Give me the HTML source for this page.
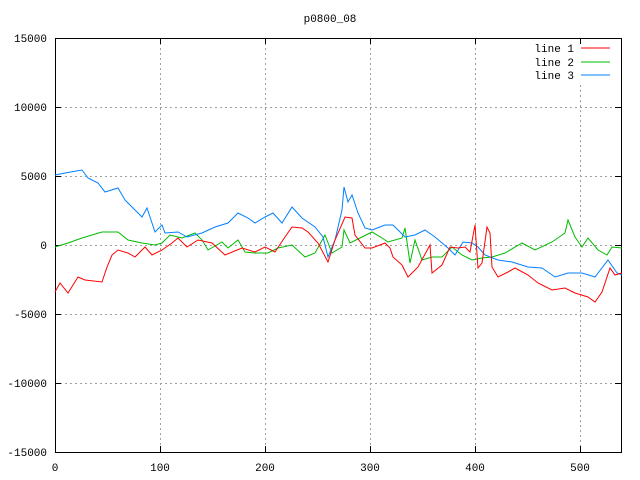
<!DOCTYPE html><html><head><style>body{margin:0;background:#fff}svg{display:block}text{font-family:"Liberation Mono","DejaVu Sans Mono",monospace;font-size:11px;fill:#000}</style></head><body>
<svg width="640" height="480" viewBox="0 0 640 480">
<g stroke="#a0a0a0" stroke-dasharray="2,3" stroke-width="1">
<line x1="160.5" y1="38" x2="160.5" y2="452"/><line x1="265.5" y1="38" x2="265.5" y2="452"/><line x1="370.5" y1="38" x2="370.5" y2="452"/><line x1="475.5" y1="38" x2="475.5" y2="452"/><line x1="580.5" y1="85" x2="580.5" y2="452"/>
<line x1="55" y1="107.5" x2="621" y2="107.5"/><line x1="55" y1="176.5" x2="621" y2="176.5"/><line x1="55" y1="245.5" x2="621" y2="245.5"/><line x1="55" y1="314.5" x2="621" y2="314.5"/><line x1="55" y1="383.5" x2="621" y2="383.5"/>
</g>
<g stroke="#000" stroke-width="1">
<rect x="55.5" y="38.5" width="566" height="414" fill="none"/>
<path d="M55 107.5h6M55 176.5h6M55 245.5h6M55 314.5h6M55 383.5h6M621 107.5h-6M621 176.5h-6M621 245.5h-6M621 314.5h-6M621 383.5h-6M160.5 452v-6M265.5 452v-6M370.5 452v-6M475.5 452v-6M580.5 452v-6M160.5 38v6M265.5 38v6M370.5 38v6M475.5 38v6M580.5 38v6"/>
</g>
<text x="330" y="22" text-anchor="middle">p0800_08</text>
<g text-anchor="end"><text x="47" y="42">15000</text><text x="47" y="111">10000</text><text x="47" y="180">5000</text><text x="47" y="249">0</text><text x="47" y="318">-5000</text><text x="47" y="387">-10000</text><text x="47" y="456">-15000</text></g>
<g text-anchor="middle"><text x="55" y="471">0</text><text x="160" y="471">100</text><text x="265" y="471">200</text><text x="370" y="471">300</text><text x="475" y="471">400</text><text x="580" y="471">500</text></g>
<g text-anchor="end"><text x="574" y="52">line 1</text><text x="574" y="66">line 2</text><text x="574" y="79">line 3</text></g>
<line x1="581" y1="48" x2="610" y2="48" stroke="#f00"/><line x1="581" y1="62" x2="610" y2="62" stroke="#0b0"/><line x1="581" y1="75" x2="610" y2="75" stroke="#0080ff"/>
<g fill="none" stroke-width="1">
<polyline stroke="#0b0" points="55,247 68,243 82,238 102,232 118,232 128,240 142,243 155,245 162,243 170,235 182,238 195,233 202,240 208,250 222,242 228,248 238,240 245,252 255,253 268,253 278,248 292,245 305,257 315,253 325,235 332,253 342,247 344,230 350,243 362,237 372,232 382,238 388,242 402,238 405,228 410,263 415,240 422,260 432,257 442,257 452,247 462,255 472,260 482,258 492,257 505,253 522,243 535,250 552,242 565,233 568,220 575,237 582,247 588,238 598,250 607,255 612,247 622,248"/>
<polyline stroke="#0080ff" points="55,175 65,173 82,170 88,178 98,183 105,192 118,188 125,200 135,210 142,217 147,208 155,232 162,225 165,233 178,232 187,237 202,233 215,227 228,223 238,213 248,218 255,223 265,217 273,213 282,223 292,207 302,218 315,227 323,237 328,257 335,240 342,210 344,187 348,202 352,195 358,213 365,228 372,230 385,225 393,225 405,237 415,235 425,230 435,237 448,248 455,255 463,242 472,243 478,247 485,255 498,260 512,262 528,267 542,268 555,277 568,273 582,273 595,277 608,260 617,273 622,275"/>
<polyline stroke="#f00" points="55,292 60,283 68,293 78,277 85,280 102,282 107,267 112,255 118,250 128,253 135,257 145,247 152,255 162,250 172,243 178,238 187,247 198,240 212,243 225,255 242,248 255,252 265,247 275,252 285,237 292,227 302,228 308,232 318,243 328,262 335,240 345,217 352,218 355,235 365,248 372,248 385,243 390,248 393,257 402,265 408,277 418,267 430,245 432,273 442,265 450,247 458,248 465,247 470,252 475,225 478,268 482,263 487,227 490,233 492,267 498,277 508,272 515,268 528,275 538,283 552,290 565,288 575,293 588,297 595,302 602,292 610,268 615,275 622,273"/>
</g>
</svg></body></html>
